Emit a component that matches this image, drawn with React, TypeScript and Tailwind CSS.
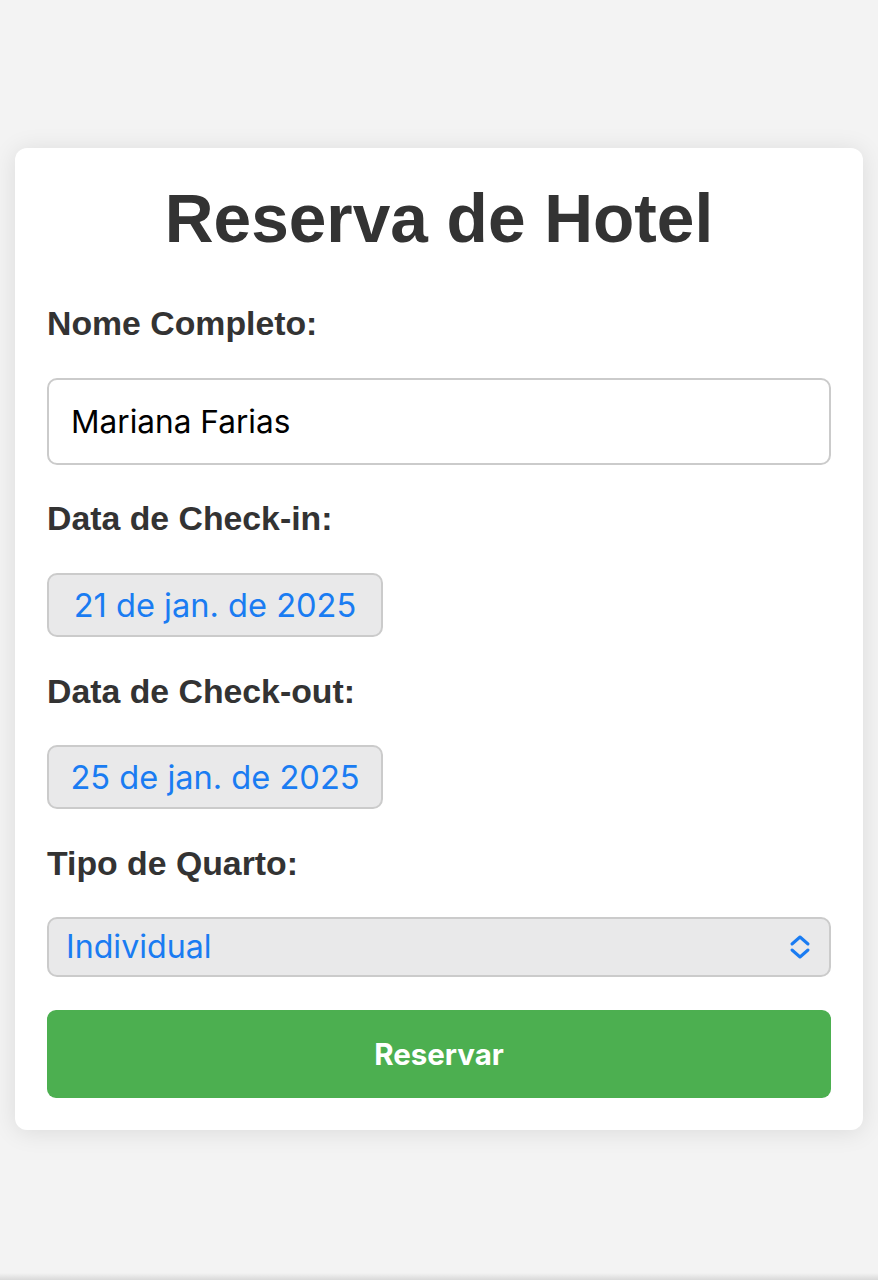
import React from "react";

const arial = { fontFamily: '"Liberation Sans", Arial, sans-serif' };

function Chevrons() {
  return (
    <svg width="22" height="26" viewBox="0 0 22 26" fill="none">
      <path d="M3 10 L11 3 L19 10" stroke="#1a7cf2" strokeWidth="3" strokeLinecap="round" strokeLinejoin="round" />
      <path d="M3 16 L11 23 L19 16" stroke="#1a7cf2" strokeWidth="3" strokeLinecap="round" strokeLinejoin="round" />
    </svg>
  );
}

export default function App() {
  return (
    <div className="min-h-[1280px] flex flex-col bg-[#f3f3f3]">
      <div className="mx-[15px] mt-[148px] rounded-[12px] bg-white p-[32px] shadow-[0_2px_24px_rgba(0,0,0,0.10)]">
        <h1
          className="text-center text-[67.6px] leading-[77px] font-bold text-[#333] mb-[47px]"
          style={arial}
        >
          Reserva de Hotel
        </h1>

        <label className="block text-[33.8px] leading-[38px] font-bold text-[#333]" style={arial}>
          Nome Completo:
        </label>
        <div className="mt-[36px] h-[87px] rounded-[10px] border-2 border-[#cbcbcb] bg-white flex items-center pl-[22px] font-['Inter',sans-serif] text-[31.6px] text-black">
          Mariana Farias
        </div>

        <label className="mt-[34px] block text-[33.8px] leading-[38px] font-bold text-[#333]" style={arial}>
          Data de Check-in:
        </label>
        <div className="mt-[36px] h-[64px] w-[336px] rounded-[10px] border-2 border-[#cbcbcb] bg-[#e9e9ea] flex items-center justify-center font-['Inter',sans-serif] text-[32.6px] text-[#1a7cf2]">
          21 de jan. de 2025
        </div>

        <label className="mt-[35px] block text-[33.8px] leading-[38px] font-bold text-[#333]" style={arial}>
          Data de Check-out:
        </label>
        <div className="mt-[35px] h-[64px] w-[336px] rounded-[10px] border-2 border-[#cbcbcb] bg-[#e9e9ea] flex items-center justify-center font-['Inter',sans-serif] text-[32.6px] text-[#1a7cf2]">
          25 de jan. de 2025
        </div>

        <label className="mt-[35px] block text-[33.8px] leading-[38px] font-bold text-[#333]" style={arial}>
          Tipo de Quarto:
        </label>
        <div className="mt-[35px] h-[60px] rounded-[10px] border-2 border-[#cbcbcb] bg-[#e9e9ea] flex items-center justify-between pl-[17px] pr-[18px] font-['Inter',sans-serif] text-[32.2px] text-[#1a7cf2]">
          <span>Individual</span>
          <Chevrons />
        </div>

        <button className="mt-[33px] h-[88px] w-full rounded-[9px] bg-[#4caf50] flex items-center justify-center font-['Inter',sans-serif] text-[29.5px] font-bold text-white">
          Reservar
        </button>
      </div>
      <div className="flex-1" />
      <div className="h-[7px] bg-gradient-to-b from-[#f3f3f3] to-[#d9d9d9]" />
    </div>
  );
}
